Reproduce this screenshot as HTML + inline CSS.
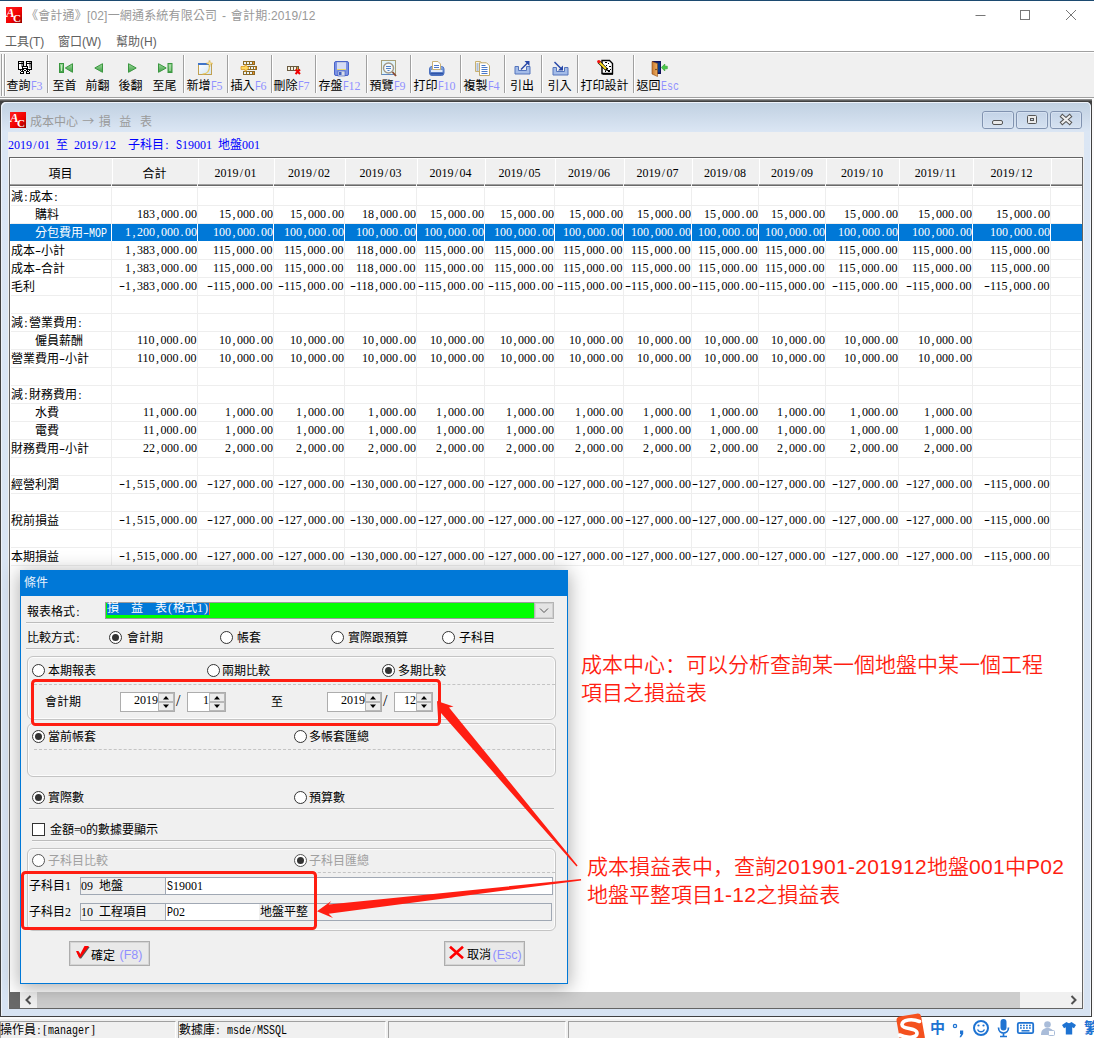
<!DOCTYPE html><html><head><meta charset="utf-8"><title>會計通</title><style>
*{box-sizing:border-box;margin:0;padding:0}
html,body{width:1094px;height:1038px;overflow:hidden;background:#fff}
body{position:relative;font-family:"Liberation Serif","Noto Sans CJK TC",sans-serif;font-size:12px;color:#000}
i{display:inline-block;width:6px;font-style:normal;text-align:center}
.m{transform:scaleX(1.5)}
div{position:absolute;white-space:nowrap}
svg{position:absolute;overflow:visible}
.t{font-size:12px}
.l{display:inline-block;transform:scaleX(.8333);transform-origin:0 50%;font-family:"Liberation Mono",monospace}
.u{font-family:"Liberation Sans","Noto Sans CJK TC",sans-serif;font-size:12px}
.fk{color:#9090ff}
.sep{width:2px;border-left:1px solid #a0a0a0;border-right:1px solid #fff}
.hl{height:2px;border-top:1px solid #bcbcbc;border-bottom:1px solid #f8f8f8}
.r{width:13px;height:13px;border:1px solid #333;border-radius:50%;background:#fff}
.r.on::after{content:"";position:absolute;left:2px;top:2px;width:7px;height:7px;border-radius:50%;background:#333}
.r.dis{border-color:#555}
.gb{border:1px solid #c4c4c4;border-radius:6px;box-shadow:inset 0 0 0 1px #fcfcfc}
.dash{height:0;border-top:1px dashed #c4c4c4}
.spin{border:1px solid #adadad;background:#fff}
.red{font-weight:350;color:#ff1e12;font-family:"Liberation Sans","Noto Sans CJK SC",sans-serif;font-size:21px}
.red b{font-weight:normal;letter-spacing:.3px}
</style></head><body><div style="left:0px;top:0px;width:1094px;height:1px;background:#1c4a70"></div><svg style="left:6px;top:7px" width="16" height="16" viewBox="0 0 16 16"><defs><linearGradient id="g6" x1="0" y1="0" x2="1" y2="1"><stop offset="0" stop-color="#ff2020"/><stop offset=".6" stop-color="#f00000"/><stop offset="1" stop-color="#900000"/></linearGradient></defs><rect width="16" height="16" fill="url(#g6)"/><text x="0" y="10" font-family="Liberation Serif,serif" font-style="italic" font-weight="bold" font-size="13" fill="#fff">A</text><text x="7" y="15" font-family="Liberation Serif,serif" font-weight="bold" font-size="11" fill="#fff">C</text></svg><div class="u" style="left:26px;top:8px;height:16px;line-height:16px;color:#999;word-spacing:1.2px;letter-spacing:.18px">《會計通》[02]一網通系統有限公司 - 會計期:2019/12</div><svg style="left:960px;top:1px" width="134" height="29" viewBox="0 0 134 29"><path d="M15.5 14.5h10" stroke="#777" fill="none"/><rect x="60.5" y="9.5" width="9" height="9" stroke="#777" fill="none"/><path d="M106 9l10 10M116 9l-10 10" stroke="#777" fill="none"/></svg><div class="u" style="left:5px;top:34px;height:16px;line-height:16px;color:#606060">工具(T)</div><div class="u" style="left:58px;top:34px;height:16px;line-height:16px;color:#606060">窗口(W)</div><div class="u" style="left:116px;top:34px;height:16px;line-height:16px;color:#606060">幫助(H)</div><div style="left:0px;top:51px;width:1094px;height:47px;background:#f0f0f0;border-top:1px solid #a0a0a0;border-bottom:1px solid #a0a0a0"></div><div style="left:0px;top:52px;width:1094px;height:1px;background:#fff"></div><div style="left:0px;top:98px;width:1094px;height:1px;background:#fff"></div><div class="sep" style="left:1px;top:54px;width:2px;height:42px;"></div><div class="sep" style="left:4px;top:54px;width:2px;height:42px;"></div><div class="sep" style="left:47px;top:55px;width:2px;height:38px;"></div><div class="sep" style="left:183px;top:55px;width:2px;height:38px;"></div><div class="sep" style="left:227px;top:55px;width:2px;height:38px;"></div><div class="sep" style="left:271px;top:55px;width:2px;height:38px;"></div><div class="sep" style="left:315px;top:55px;width:2px;height:38px;"></div><div class="sep" style="left:366px;top:55px;width:2px;height:38px;"></div><div class="sep" style="left:410px;top:55px;width:2px;height:38px;"></div><div class="sep" style="left:460px;top:55px;width:2px;height:38px;"></div><div class="sep" style="left:504px;top:55px;width:2px;height:38px;"></div><div class="sep" style="left:541px;top:55px;width:2px;height:38px;"></div><div class="sep" style="left:577px;top:55px;width:2px;height:38px;"></div><div class="sep" style="left:633px;top:55px;width:2px;height:38px;"></div><div class="t" style="left:6.5px;top:79px;height:15px;line-height:15px;">查詢<span class="fk"><span class="l" style="margin-right:-1.2px">F</span>3</span></div><div class="t" style="left:52.5px;top:79px;height:15px;line-height:15px;">至首</div><div class="t" style="left:85.5px;top:79px;height:15px;line-height:15px;">前翻</div><div class="t" style="left:118.5px;top:79px;height:15px;line-height:15px;">後翻</div><div class="t" style="left:152.5px;top:79px;height:15px;line-height:15px;">至尾</div><div class="t" style="left:186.5px;top:79px;height:15px;line-height:15px;">新增<span class="fk"><span class="l" style="margin-right:-1.2px">F</span>5</span></div><div class="t" style="left:230.5px;top:79px;height:15px;line-height:15px;">插入<span class="fk"><span class="l" style="margin-right:-1.2px">F</span>6</span></div><div class="t" style="left:273.5px;top:79px;height:15px;line-height:15px;">刪除<span class="fk"><span class="l" style="margin-right:-1.2px">F</span>7</span></div><div class="t" style="left:318.5px;top:79px;height:15px;line-height:15px;">存盤<span class="fk"><span class="l" style="margin-right:-1.2px">F</span>12</span></div><div class="t" style="left:369.5px;top:79px;height:15px;line-height:15px;">預覽<span class="fk"><span class="l" style="margin-right:-1.2px">F</span>9</span></div><div class="t" style="left:413.5px;top:79px;height:15px;line-height:15px;">打印<span class="fk"><span class="l" style="margin-right:-1.2px">F</span>10</span></div><div class="t" style="left:463.5px;top:79px;height:15px;line-height:15px;">複製<span class="fk"><span class="l" style="margin-right:-1.2px">F</span>4</span></div><div class="t" style="left:510px;top:79px;height:15px;line-height:15px;">引出</div><div class="t" style="left:547.5px;top:79px;height:15px;line-height:15px;">引入</div><div class="t" style="left:580.5px;top:79px;height:15px;line-height:15px;">打印設計</div><div class="t" style="left:636.5px;top:79px;height:15px;line-height:15px;">返回<span class="fk"><span class="l" style="margin-right:-3.6px">Esc</span></span></div><svg width="0" height="0" style="left:0;top:0"><defs><linearGradient id="gg" x1="0" y1="0" x2="0" y2="1"><stop offset="0" stop-color="#9ad89a"/><stop offset="1" stop-color="#3f9f45"/></linearGradient><linearGradient id="gb" x1="0" y1="0" x2="0" y2="1"><stop offset="0" stop-color="#8fb0e6"/><stop offset="1" stop-color="#3c62b4"/></linearGradient><linearGradient id="gw" x1="0" y1="0" x2="1" y2="1"><stop offset="0" stop-color="#ffffff"/><stop offset="1" stop-color="#cfe4f6"/></linearGradient><linearGradient id="gd" x1="0" y1="0" x2="1" y2="0"><stop offset="0" stop-color="#c87830"/><stop offset="1" stop-color="#f0b060"/></linearGradient></defs></svg><svg style="left:18px;top:61px" width="14" height="13" viewBox="0 0 14 13" ><g shape-rendering="crispEdges"><rect x="0" y="0" width="6" height="1" fill="#000"/><rect x="8" y="0" width="6" height="1" fill="#000"/><rect x="0" y="1" width="1" height="1" fill="#000"/><rect x="1" y="1" width="2" height="1" fill="#fff"/><rect x="3" y="1" width="2" height="1" fill="#909090"/><rect x="5" y="1" width="1" height="1" fill="#000"/><rect x="8" y="1" width="1" height="1" fill="#000"/><rect x="9" y="1" width="2" height="1" fill="#fff"/><rect x="11" y="1" width="2" height="1" fill="#909090"/><rect x="13" y="1" width="1" height="1" fill="#000"/><rect x="0" y="2" width="6" height="1" fill="#000"/><rect x="8" y="2" width="6" height="1" fill="#000"/><rect x="0" y="3" width="1" height="1" fill="#000"/><rect x="1" y="3" width="2" height="1" fill="#fff"/><rect x="3" y="3" width="2" height="1" fill="#909090"/><rect x="5" y="3" width="1" height="1" fill="#000"/><rect x="8" y="3" width="1" height="1" fill="#000"/><rect x="9" y="3" width="2" height="1" fill="#fff"/><rect x="11" y="3" width="2" height="1" fill="#909090"/><rect x="13" y="3" width="1" height="1" fill="#000"/><rect x="0" y="4" width="1" height="1" fill="#000"/><rect x="1" y="4" width="2" height="1" fill="#fff"/><rect x="3" y="4" width="2" height="1" fill="#909090"/><rect x="5" y="4" width="1" height="1" fill="#000"/><rect x="8" y="4" width="1" height="1" fill="#000"/><rect x="9" y="4" width="2" height="1" fill="#fff"/><rect x="11" y="4" width="2" height="1" fill="#909090"/><rect x="13" y="4" width="1" height="1" fill="#000"/><rect x="0" y="5" width="1" height="1" fill="#000"/><rect x="1" y="5" width="2" height="1" fill="#fff"/><rect x="3" y="5" width="1" height="1" fill="#909090"/><rect x="4" y="5" width="6" height="1" fill="#000"/><rect x="10" y="5" width="1" height="1" fill="#fff"/><rect x="11" y="5" width="2" height="1" fill="#909090"/><rect x="13" y="5" width="1" height="1" fill="#000"/><rect x="0" y="6" width="1" height="1" fill="#000"/><rect x="1" y="6" width="3" height="1" fill="#fff"/><rect x="4" y="6" width="1" height="1" fill="#000"/><rect x="5" y="6" width="4" height="1" fill="#fff"/><rect x="9" y="6" width="1" height="1" fill="#000"/><rect x="10" y="6" width="1" height="1" fill="#fff"/><rect x="11" y="6" width="2" height="1" fill="#909090"/><rect x="13" y="6" width="1" height="1" fill="#000"/><rect x="0" y="7" width="1" height="1" fill="#000"/><rect x="1" y="7" width="3" height="1" fill="#fff"/><rect x="4" y="7" width="6" height="1" fill="#000"/><rect x="10" y="7" width="3" height="1" fill="#fff"/><rect x="13" y="7" width="1" height="1" fill="#000"/><rect x="0" y="8" width="6" height="1" fill="#000"/><rect x="6" y="8" width="2" height="1" fill="#fff"/><rect x="8" y="8" width="6" height="1" fill="#000"/><rect x="2" y="9" width="1" height="1" fill="#000"/><rect x="3" y="9" width="1" height="1" fill="#fff"/><rect x="4" y="9" width="1" height="1" fill="#000"/><rect x="5" y="9" width="1" height="1" fill="#fff"/><rect x="6" y="9" width="2" height="1" fill="#000"/><rect x="8" y="9" width="1" height="1" fill="#fff"/><rect x="9" y="9" width="1" height="1" fill="#000"/><rect x="10" y="9" width="1" height="1" fill="#fff"/><rect x="11" y="9" width="1" height="1" fill="#000"/><rect x="3" y="10" width="3" height="1" fill="#000"/><rect x="8" y="10" width="3" height="1" fill="#000"/><rect x="2" y="11" width="1" height="1" fill="#000"/><rect x="3" y="11" width="2" height="1" fill="#fff"/><rect x="5" y="11" width="1" height="1" fill="#000"/><rect x="8" y="11" width="1" height="1" fill="#000"/><rect x="9" y="11" width="2" height="1" fill="#fff"/><rect x="11" y="11" width="1" height="1" fill="#000"/><rect x="2" y="12" width="4" height="1" fill="#000"/><rect x="8" y="12" width="4" height="1" fill="#000"/></g></svg><svg style="left:59px;top:63px" width="15" height="10" viewBox="0 0 15 10" ><rect x=".5" y=".5" width="4" height="9" fill="url(#gg)" stroke="#3a963f"/><rect x="2" y="2" width="1" height="6" fill="#c8ecc0"/><path d="M6.3 5L13.5.7v8.6z" fill="url(#gg)" stroke="#3a963f" stroke-linejoin="round"/></svg><svg style="left:94px;top:63px" width="10" height="10" viewBox="0 0 10 10" ><path d="M.8 5L8.5.7v8.6z" fill="url(#gg)" stroke="#3a963f" stroke-linejoin="round"/></svg><svg style="left:127px;top:63px" width="10" height="10" viewBox="0 0 10 10" ><path d="M9.2 5L1.5.7v8.6z" fill="url(#gg)" stroke="#3a963f" stroke-linejoin="round"/></svg><svg style="left:157px;top:63px" width="16" height="10" viewBox="0 0 16 10" ><path d="M9.2 5L1.5.7v8.6z" fill="url(#gg)" stroke="#3a963f" stroke-linejoin="round"/><rect x="11" y=".5" width="4" height="9" fill="url(#gg)" stroke="#3a963f"/><rect x="12.5" y="2" width="1" height="6" fill="#c8ecc0"/></svg><svg style="left:197px;top:60px" width="17" height="16" viewBox="0 0 17 16" ><rect x="1.5" y="3.5" width="13" height="11" fill="url(#gw)" stroke="#c0a050"/><rect x="1" y="3" width="11" height="2" fill="#3f74c8"/><path d="M12.5 6c0 5-2 8-7 8" stroke="#e8c860" stroke-width="1.2" fill="none"/><path d="M12.5 .5v6M9.5 3.5h6" stroke="#d8a830" stroke-width="1.6"/><path d="M12.5 1.5v4M10.5 3.5h4" stroke="#fff2b0" stroke-width=".7"/></svg><svg style="left:241px;top:61px" width="16" height="14" viewBox="0 0 16 14" ><g shape-rendering="crispEdges"><rect x="2" y="0" width="12" height="4" fill="#8a6a28"/><rect x="4" y="5" width="12" height="4" fill="#8a6a28"/><rect x="2" y="10" width="12" height="4" fill="#8a6a28"/><rect x="3" y="1" width="2" height="2" fill="#e8f4fa"/><rect x="6" y="1" width="2" height="2" fill="#e8f4fa"/><rect x="9" y="1" width="2" height="2" fill="#e8f4fa"/><rect x="7" y="6" width="2" height="2" fill="#e8f4fa"/><rect x="10" y="6" width="2" height="2" fill="#e8f4fa"/><rect x="13" y="6" width="2" height="2" fill="#e8f4fa"/><rect x="3" y="11" width="2" height="2" fill="#e8f4fa"/><rect x="6" y="11" width="2" height="2" fill="#e8f4fa"/><rect x="9" y="11" width="2" height="2" fill="#e8f4fa"/><rect x="12" y="1" width="1" height="2" fill="#f09020"/><rect x="14" y="6" width="1" height="2" fill="#f09020"/><rect x="12" y="11" width="1" height="2" fill="#f09020"/></g><path d="M0 5.5h4V3.5L8 7 4 10.5V8.5H0z" fill="#ffd860" stroke="#d89820" stroke-width=".8"/></svg><svg style="left:287px;top:65px" width="14" height="10" viewBox="0 0 14 10" ><g shape-rendering="crispEdges"><rect x="0" y="1" width="12" height="5" fill="#6a5a40"/><rect x="1" y="2" width="2" height="3" fill="#f4f0e0"/><rect x="4" y="2" width="2" height="3" fill="#f4f0e0"/><rect x="7" y="2" width="2" height="3" fill="#f4f0e0"/><rect x="10" y="2" width="1" height="3" fill="#e09030"/></g><path d="M8.5 4.5l4.5 4.5M13 4.5L8.5 9" stroke="#f00000" stroke-width="2"/></svg><svg style="left:334px;top:61px" width="15" height="15" viewBox="0 0 15 15" ><rect x=".5" y=".5" width="14" height="14" rx="1.5" fill="#7b92e3" stroke="#4a63c9"/><rect x="3" y="1" width="9" height="7" fill="#d6dcf5"/><rect x="3" y="1" width="9" height="1" fill="#c0c8e0"/><rect x="4" y="10" width="7" height="5" fill="#d8dce8" stroke="#3c58c0" stroke-width=".6"/><rect x="5" y="11" width="2.5" height="3" fill="#4060c0"/><rect x="3" y="8" width="9" height="1" fill="#e8d870"/></svg><svg style="left:381px;top:60px" width="16" height="17" viewBox="0 0 16 17" ><rect x=".5" y=".5" width="14" height="14" fill="#e0f4fa" stroke="#a8a078"/><path d="M.5 14.5h14" stroke="#6088c0"/><circle cx="7.5" cy="8" r="5" fill="#f4fafc" stroke="#a09888" stroke-width="1.4"/><path d="M5 6.5h5M5 8.5h5" stroke="#5080c8" stroke-width="1.2"/><path d="M6.5 10.5h2" stroke="#5080c8"/><path d="M11.5 12l3.5 4" stroke="#8a4a30" stroke-width="1.8"/></svg><svg style="left:429px;top:61px" width="16" height="15" viewBox="0 0 16 15" ><rect x=".5" y="5.5" width="14.5" height="9" rx="2.5" fill="url(#gb)" stroke="#4a70c0"/><path d="M3.5 8.5V.5h5.5l2.500 2.500v5.500z" fill="#fff" stroke="#c8b078"/><path d="M5 4.500h5M5 6.500h5" stroke="#5078c8"/><rect x="2" y="9" width="11.500" height="2" fill="#dfe9fa"/><path d="M1.500 12.500h12.500" stroke="#2f54a8"/></svg><svg style="left:475px;top:61px" width="15" height="15" viewBox="0 0 15 15" ><path d="M.5 .5h5l2 2v8h-7z" fill="#fbf6e8" stroke="#c8b070"/><path d="M4.500 1.800h7l3 3v9.700h-10z" fill="#fff" stroke="#c0a868"/><path d="M6.500 4.500h4M6.500 6.500h6M6.500 8.500h6M6.500 10.500h6M6.500 12.500h6" stroke="#4878c8" stroke-width="1.100"/><path d="M1.500 3h2M1.500 5h2M1.500 7h2M1.500 9h2" stroke="#4878c8" stroke-width=".9"/></svg><svg style="left:514px;top:60px" width="17" height="15" viewBox="0 0 17 15" ><path d="M1 6.500h3.500v4h8v-4H16v7.500H1z" fill="#a4bce8" stroke="#5474bc"/><path d="M7 9.500L14 2.500" stroke="#2848a8" stroke-width="1.500"/><path d="M10.500 1h5v5z" fill="#2848a8"/></svg><svg style="left:552px;top:60px" width="17" height="16" viewBox="0 0 17 16" ><path d="M1 7.500h3.500v4h8v-4H16v7.500H1z" fill="#a4bce8" stroke="#5474bc"/><path d="M2.500 2L9 8.500" stroke="#2848a8" stroke-width="1.500"/><path d="M11 5.500v5h-5z" fill="#2848a8"/></svg><svg style="left:597px;top:59px" width="17" height="16" viewBox="0 0 17 16" ><path d="M5 1.500h7.500l3 3v10H5z" fill="#fff" stroke="#000" stroke-width="1.400"/><path d="M5.500 15.300h10.500" stroke="#000" stroke-width="1"/><g fill="#000" shape-rendering="crispEdges"><rect x="8" y="3" width="2" height="1"/><rect x="11" y="4" width="1" height="1"/><rect x="9" y="6" width="1" height="1"/><rect x="12" y="7" width="2" height="1"/><rect x="10" y="9" width="1" height="1"/><rect x="13" y="10" width="1" height="1"/><rect x="11" y="11" width="2" height="2"/><rect x="8" y="12" width="1" height="1"/></g><path d="M1.800 2.800l8 8" stroke="#000" stroke-width="3.200"/><path d="M2.500 3.500l6.500 6.500" stroke="#ffe020" stroke-width="1.800"/><circle cx="1.800" cy="2.600" r="1.700" fill="#f01010"/><path d="M9 10l1.800 1.800" stroke="#000" stroke-width="1.400"/></svg><svg style="left:651px;top:60px" width="17" height="17" viewBox="0 0 17 17" ><rect x="1" y="1" width="9" height="13" fill="#101058"/><rect x="3" y="2.500" width="6" height="10" fill="#0a3a8a"/><path d="M1 1.500l5.500 2v13L1 14z" fill="url(#gd)" stroke="#8a4810" stroke-width=".6"/><circle cx="5" cy="9.500" r=".7" fill="#402000"/><path d="M10.300 7.500l3.500-3.500v2.200h2.500v2.600h-2.500V11z" fill="#48c848" stroke="#2a9a2a" stroke-width=".6"/></svg><div style="left:0px;top:99px;width:1092px;height:918px;background:linear-gradient(#909090 0,#909090 1px,#606060 1px,#606060 2px,#404040 2px)"></div><div style="left:1092px;top:98px;width:2px;height:919px;background:#fafafa"></div><div style="left:1px;top:102px;width:1090px;height:914px;background:linear-gradient(#c0d0e1 0,#dbe6f4 30px,#d7e3f2 100%);border-radius:5px 5px 0 0;box-shadow:inset 1px 1px 0 #eef3fa,inset -1px 0 0 #eef3fa"></div><svg style="left:10px;top:112px" width="16" height="16" viewBox="0 0 16 16"><defs><linearGradient id="g10" x1="0" y1="0" x2="1" y2="1"><stop offset="0" stop-color="#ff2020"/><stop offset=".6" stop-color="#f00000"/><stop offset="1" stop-color="#900000"/></linearGradient></defs><rect width="16" height="16" fill="url(#g10)"/><text x="0" y="10" font-family="Liberation Serif,serif" font-style="italic" font-weight="bold" font-size="13" fill="#fff">A</text><text x="7" y="15" font-family="Liberation Serif,serif" font-weight="bold" font-size="11" fill="#fff">C</text></svg><div class="u" style="left:30px;top:113px;height:16px;line-height:16px;color:#9a9a9a;white-space:pre;word-spacing:1px">成本中心 <span style="font-family:Noto Sans CJK TC,sans-serif">→</span> 損  益  表</div><svg width="0" height="0" style="left:0;top:0"><defs><linearGradient id="cb" x1="0" y1="0" x2="0" y2="1"><stop offset="0" stop-color="#c3d3e7"/><stop offset="1" stop-color="#d6e2f1"/></linearGradient></defs></svg><svg style="left:982px;top:111px" width="32" height="18" viewBox="0 0 32 18"><rect x=".5" y=".5" width="31" height="17" rx="2.500" fill="url(#cb)" stroke="#8193b0"/><rect x="1.500" y="1.500" width="29" height="15" rx="1.500" fill="none" stroke="#dbe6f3" stroke-opacity=".7"/><rect x="10.500" y="9.500" width="10" height="4" rx="1.500" fill="#eaeaea" stroke="#555"/></svg><svg style="left:1016px;top:111px" width="32" height="18" viewBox="0 0 32 18"><rect x=".5" y=".5" width="31" height="17" rx="2.500" fill="url(#cb)" stroke="#8193b0"/><rect x="1.500" y="1.500" width="29" height="15" rx="1.500" fill="none" stroke="#dbe6f3" stroke-opacity=".7"/><rect x="11.500" y="4.500" width="9" height="8" rx="1" fill="#eaeaea" stroke="#555"/><rect x="14.500" y="7.500" width="3" height="2" fill="#c6d6ea" stroke="#555"/></svg><svg style="left:1050px;top:111px" width="32" height="18" viewBox="0 0 32 18"><rect x=".5" y=".5" width="31" height="17" rx="2.500" fill="url(#cb)" stroke="#8193b0"/><rect x="1.500" y="1.500" width="29" height="15" rx="1.500" fill="none" stroke="#dbe6f3" stroke-opacity=".7"/><path d="M12.500 5.500l7 6M19.500 5.500l-7 6" stroke="#555" stroke-width="4.200" stroke-linecap="square"/><path d="M12.500 5.500l7 6M19.500 5.500l-7 6" stroke="#f0f0f0" stroke-width="2.200" stroke-linecap="square"/></svg><div style="left:8px;top:132px;width:1076px;height:877px;background:#f0f0f0"></div><div class="t" style="left:8px;top:138px;height:15px;line-height:15px;color:#0000ff">2019<i>/</i>01<i>&nbsp;</i>至<i>&nbsp;</i>2019<i>/</i>12<i>&nbsp;</i><i>&nbsp;</i>子科目<i>:</i><i>&nbsp;</i><span class="l" style="margin-right:-1.2px">S</span>19001<i>&nbsp;</i>地盤001</div><div style="left:9px;top:157px;width:1074px;height:852px;background:#fff;border:1px solid #646464"></div><div style="left:10px;top:158px;width:1072px;height:28px;background:#f0f0f0"></div><div style="left:10px;top:158px;width:1072px;height:1px;background:#fff"></div><div style="left:10px;top:184px;width:1072px;height:2px;background:#696969;border-top:1px solid #a0a0a0"></div><div style="left:10px;top:187px;width:1072px;height:1px;background:#eee"></div><div style="left:10px;top:159px;width:1px;height:25px;background:#fff"></div><div style="left:112px;top:159px;width:1px;height:25px;background:#fff"></div><div style="left:111px;top:159px;width:1px;height:27px;background:#f0f0f0"></div><div style="left:198px;top:159px;width:1px;height:25px;background:#fff"></div><div style="left:197px;top:159px;width:1px;height:27px;background:#f0f0f0"></div><div style="left:274px;top:159px;width:1px;height:25px;background:#fff"></div><div style="left:273px;top:159px;width:1px;height:27px;background:#f0f0f0"></div><div style="left:345px;top:159px;width:1px;height:25px;background:#fff"></div><div style="left:344px;top:159px;width:1px;height:27px;background:#f0f0f0"></div><div style="left:417px;top:159px;width:1px;height:25px;background:#fff"></div><div style="left:416px;top:159px;width:1px;height:27px;background:#f0f0f0"></div><div style="left:485px;top:159px;width:1px;height:25px;background:#fff"></div><div style="left:484px;top:159px;width:1px;height:27px;background:#f0f0f0"></div><div style="left:555px;top:159px;width:1px;height:25px;background:#fff"></div><div style="left:554px;top:159px;width:1px;height:27px;background:#f0f0f0"></div><div style="left:624px;top:159px;width:1px;height:25px;background:#fff"></div><div style="left:623px;top:159px;width:1px;height:27px;background:#f0f0f0"></div><div style="left:692px;top:159px;width:1px;height:25px;background:#fff"></div><div style="left:691px;top:159px;width:1px;height:27px;background:#f0f0f0"></div><div style="left:759px;top:159px;width:1px;height:25px;background:#fff"></div><div style="left:758px;top:159px;width:1px;height:27px;background:#f0f0f0"></div><div style="left:826px;top:159px;width:1px;height:25px;background:#fff"></div><div style="left:825px;top:159px;width:1px;height:27px;background:#f0f0f0"></div><div style="left:899px;top:159px;width:1px;height:25px;background:#fff"></div><div style="left:898px;top:159px;width:1px;height:27px;background:#f0f0f0"></div><div style="left:973px;top:159px;width:1px;height:25px;background:#fff"></div><div style="left:972px;top:159px;width:1px;height:27px;background:#f0f0f0"></div><div style="left:1051px;top:159px;width:1px;height:25px;background:#fff"></div><div style="left:1050px;top:159px;width:1px;height:27px;background:#f0f0f0"></div><div class="t" style="left:10px;top:167px;height:15px;line-height:15px;width:101px;text-align:center">項目</div><div class="t" style="left:112px;top:167px;height:15px;line-height:15px;width:85px;text-align:center">合計</div><div class="t" style="left:198px;top:166px;height:15px;line-height:15px;width:75px;text-align:center">2019<i>/</i>01</div><div class="t" style="left:274px;top:166px;height:15px;line-height:15px;width:70px;text-align:center">2019<i>/</i>02</div><div class="t" style="left:345px;top:166px;height:15px;line-height:15px;width:71px;text-align:center">2019<i>/</i>03</div><div class="t" style="left:417px;top:166px;height:15px;line-height:15px;width:67px;text-align:center">2019<i>/</i>04</div><div class="t" style="left:485px;top:166px;height:15px;line-height:15px;width:69px;text-align:center">2019<i>/</i>05</div><div class="t" style="left:555px;top:166px;height:15px;line-height:15px;width:68px;text-align:center">2019<i>/</i>06</div><div class="t" style="left:624px;top:166px;height:15px;line-height:15px;width:67px;text-align:center">2019<i>/</i>07</div><div class="t" style="left:692px;top:166px;height:15px;line-height:15px;width:66px;text-align:center">2019<i>/</i>08</div><div class="t" style="left:759px;top:166px;height:15px;line-height:15px;width:66px;text-align:center">2019<i>/</i>09</div><div class="t" style="left:826px;top:166px;height:15px;line-height:15px;width:72px;text-align:center">2019<i>/</i>10</div><div class="t" style="left:899px;top:166px;height:15px;line-height:15px;width:73px;text-align:center">2019<i>/</i>11</div><div class="t" style="left:973px;top:166px;height:15px;line-height:15px;width:77px;text-align:center">2019<i>/</i>12</div><div style="left:11px;top:205px;width:1070px;height:1px;background:#eee"></div><div class="t" style="left:11px;top:189px;height:16px;line-height:16px;">減<i>:</i>成本<i>:</i></div><div style="left:11px;top:223px;width:1070px;height:1px;background:#eee"></div><div class="t" style="left:35px;top:207px;height:16px;line-height:16px;">購料</div><div class="t" style="left:137px;top:206px;height:16px;line-height:16px;">183<i>,</i>000<i>.</i>00</div><div class="t" style="left:219px;top:206px;height:16px;line-height:16px;">15<i>,</i>000<i>.</i>00</div><div class="t" style="left:290px;top:206px;height:16px;line-height:16px;">15<i>,</i>000<i>.</i>00</div><div class="t" style="left:362px;top:206px;height:16px;line-height:16px;">18<i>,</i>000<i>.</i>00</div><div class="t" style="left:430px;top:206px;height:16px;line-height:16px;">15<i>,</i>000<i>.</i>00</div><div class="t" style="left:500px;top:206px;height:16px;line-height:16px;">15<i>,</i>000<i>.</i>00</div><div class="t" style="left:569px;top:206px;height:16px;line-height:16px;">15<i>,</i>000<i>.</i>00</div><div class="t" style="left:637px;top:206px;height:16px;line-height:16px;">15<i>,</i>000<i>.</i>00</div><div class="t" style="left:704px;top:206px;height:16px;line-height:16px;">15<i>,</i>000<i>.</i>00</div><div class="t" style="left:771px;top:206px;height:16px;line-height:16px;">15<i>,</i>000<i>.</i>00</div><div class="t" style="left:844px;top:206px;height:16px;line-height:16px;">15<i>,</i>000<i>.</i>00</div><div class="t" style="left:918px;top:206px;height:16px;line-height:16px;">15<i>,</i>000<i>.</i>00</div><div class="t" style="left:996px;top:206px;height:16px;line-height:16px;">15<i>,</i>000<i>.</i>00</div><div style="left:10px;top:224px;width:1072px;height:17px;background:#0078d7"></div><div class="t" style="left:35px;top:225px;height:16px;line-height:16px;color:#fff;">分包費用<i class="m">-</i><span class="l" style="margin-right:-3.6px">MOP</span></div><div class="t" style="left:125px;top:224px;height:16px;line-height:16px;color:#fff;">1<i>,</i>200<i>,</i>000<i>.</i>00</div><div class="t" style="left:213px;top:224px;height:16px;line-height:16px;color:#fff;">100<i>,</i>000<i>.</i>00</div><div class="t" style="left:284px;top:224px;height:16px;line-height:16px;color:#fff;">100<i>,</i>000<i>.</i>00</div><div class="t" style="left:356px;top:224px;height:16px;line-height:16px;color:#fff;">100<i>,</i>000<i>.</i>00</div><div class="t" style="left:424px;top:224px;height:16px;line-height:16px;color:#fff;">100<i>,</i>000<i>.</i>00</div><div class="t" style="left:494px;top:224px;height:16px;line-height:16px;color:#fff;">100<i>,</i>000<i>.</i>00</div><div class="t" style="left:563px;top:224px;height:16px;line-height:16px;color:#fff;">100<i>,</i>000<i>.</i>00</div><div class="t" style="left:631px;top:224px;height:16px;line-height:16px;color:#fff;">100<i>,</i>000<i>.</i>00</div><div class="t" style="left:698px;top:224px;height:16px;line-height:16px;color:#fff;">100<i>,</i>000<i>.</i>00</div><div class="t" style="left:765px;top:224px;height:16px;line-height:16px;color:#fff;">100<i>,</i>000<i>.</i>00</div><div class="t" style="left:838px;top:224px;height:16px;line-height:16px;color:#fff;">100<i>,</i>000<i>.</i>00</div><div class="t" style="left:912px;top:224px;height:16px;line-height:16px;color:#fff;">100<i>,</i>000<i>.</i>00</div><div class="t" style="left:990px;top:224px;height:16px;line-height:16px;color:#fff;">100<i>,</i>000<i>.</i>00</div><div style="left:11px;top:259px;width:1070px;height:1px;background:#eee"></div><div class="t" style="left:11px;top:243px;height:16px;line-height:16px;">成本<i class="m">-</i>小計</div><div class="t" style="left:125px;top:242px;height:16px;line-height:16px;">1<i>,</i>383<i>,</i>000<i>.</i>00</div><div class="t" style="left:213px;top:242px;height:16px;line-height:16px;">115<i>,</i>000<i>.</i>00</div><div class="t" style="left:284px;top:242px;height:16px;line-height:16px;">115<i>,</i>000<i>.</i>00</div><div class="t" style="left:356px;top:242px;height:16px;line-height:16px;">118<i>,</i>000<i>.</i>00</div><div class="t" style="left:424px;top:242px;height:16px;line-height:16px;">115<i>,</i>000<i>.</i>00</div><div class="t" style="left:494px;top:242px;height:16px;line-height:16px;">115<i>,</i>000<i>.</i>00</div><div class="t" style="left:563px;top:242px;height:16px;line-height:16px;">115<i>,</i>000<i>.</i>00</div><div class="t" style="left:631px;top:242px;height:16px;line-height:16px;">115<i>,</i>000<i>.</i>00</div><div class="t" style="left:698px;top:242px;height:16px;line-height:16px;">115<i>,</i>000<i>.</i>00</div><div class="t" style="left:765px;top:242px;height:16px;line-height:16px;">115<i>,</i>000<i>.</i>00</div><div class="t" style="left:838px;top:242px;height:16px;line-height:16px;">115<i>,</i>000<i>.</i>00</div><div class="t" style="left:912px;top:242px;height:16px;line-height:16px;">115<i>,</i>000<i>.</i>00</div><div class="t" style="left:990px;top:242px;height:16px;line-height:16px;">115<i>,</i>000<i>.</i>00</div><div style="left:11px;top:277px;width:1070px;height:1px;background:#eee"></div><div class="t" style="left:11px;top:261px;height:16px;line-height:16px;">成本<i class="m">-</i>合計</div><div class="t" style="left:125px;top:260px;height:16px;line-height:16px;">1<i>,</i>383<i>,</i>000<i>.</i>00</div><div class="t" style="left:213px;top:260px;height:16px;line-height:16px;">115<i>,</i>000<i>.</i>00</div><div class="t" style="left:284px;top:260px;height:16px;line-height:16px;">115<i>,</i>000<i>.</i>00</div><div class="t" style="left:356px;top:260px;height:16px;line-height:16px;">118<i>,</i>000<i>.</i>00</div><div class="t" style="left:424px;top:260px;height:16px;line-height:16px;">115<i>,</i>000<i>.</i>00</div><div class="t" style="left:494px;top:260px;height:16px;line-height:16px;">115<i>,</i>000<i>.</i>00</div><div class="t" style="left:563px;top:260px;height:16px;line-height:16px;">115<i>,</i>000<i>.</i>00</div><div class="t" style="left:631px;top:260px;height:16px;line-height:16px;">115<i>,</i>000<i>.</i>00</div><div class="t" style="left:698px;top:260px;height:16px;line-height:16px;">115<i>,</i>000<i>.</i>00</div><div class="t" style="left:765px;top:260px;height:16px;line-height:16px;">115<i>,</i>000<i>.</i>00</div><div class="t" style="left:838px;top:260px;height:16px;line-height:16px;">115<i>,</i>000<i>.</i>00</div><div class="t" style="left:912px;top:260px;height:16px;line-height:16px;">115<i>,</i>000<i>.</i>00</div><div class="t" style="left:990px;top:260px;height:16px;line-height:16px;">115<i>,</i>000<i>.</i>00</div><div style="left:11px;top:295px;width:1070px;height:1px;background:#eee"></div><div class="t" style="left:11px;top:279px;height:16px;line-height:16px;">毛利</div><div class="t" style="left:119px;top:278px;height:16px;line-height:16px;"><i class="m">-</i>1<i>,</i>383<i>,</i>000<i>.</i>00</div><div class="t" style="left:207px;top:278px;height:16px;line-height:16px;"><i class="m">-</i>115<i>,</i>000<i>.</i>00</div><div class="t" style="left:278px;top:278px;height:16px;line-height:16px;"><i class="m">-</i>115<i>,</i>000<i>.</i>00</div><div class="t" style="left:350px;top:278px;height:16px;line-height:16px;"><i class="m">-</i>118<i>,</i>000<i>.</i>00</div><div class="t" style="left:418px;top:278px;height:16px;line-height:16px;"><i class="m">-</i>115<i>,</i>000<i>.</i>00</div><div class="t" style="left:488px;top:278px;height:16px;line-height:16px;"><i class="m">-</i>115<i>,</i>000<i>.</i>00</div><div class="t" style="left:557px;top:278px;height:16px;line-height:16px;"><i class="m">-</i>115<i>,</i>000<i>.</i>00</div><div class="t" style="left:625px;top:278px;height:16px;line-height:16px;"><i class="m">-</i>115<i>,</i>000<i>.</i>00</div><div class="t" style="left:692px;top:278px;height:16px;line-height:16px;"><i class="m">-</i>115<i>,</i>000<i>.</i>00</div><div class="t" style="left:759px;top:278px;height:16px;line-height:16px;"><i class="m">-</i>115<i>,</i>000<i>.</i>00</div><div class="t" style="left:832px;top:278px;height:16px;line-height:16px;"><i class="m">-</i>115<i>,</i>000<i>.</i>00</div><div class="t" style="left:906px;top:278px;height:16px;line-height:16px;"><i class="m">-</i>115<i>,</i>000<i>.</i>00</div><div class="t" style="left:984px;top:278px;height:16px;line-height:16px;"><i class="m">-</i>115<i>,</i>000<i>.</i>00</div><div style="left:11px;top:313px;width:1070px;height:1px;background:#eee"></div><div style="left:11px;top:331px;width:1070px;height:1px;background:#eee"></div><div class="t" style="left:11px;top:315px;height:16px;line-height:16px;">減<i>:</i>營業費用<i>:</i></div><div style="left:11px;top:349px;width:1070px;height:1px;background:#eee"></div><div class="t" style="left:35px;top:333px;height:16px;line-height:16px;">僱員薪酬</div><div class="t" style="left:137px;top:332px;height:16px;line-height:16px;">110<i>,</i>000<i>.</i>00</div><div class="t" style="left:219px;top:332px;height:16px;line-height:16px;">10<i>,</i>000<i>.</i>00</div><div class="t" style="left:290px;top:332px;height:16px;line-height:16px;">10<i>,</i>000<i>.</i>00</div><div class="t" style="left:362px;top:332px;height:16px;line-height:16px;">10<i>,</i>000<i>.</i>00</div><div class="t" style="left:430px;top:332px;height:16px;line-height:16px;">10<i>,</i>000<i>.</i>00</div><div class="t" style="left:500px;top:332px;height:16px;line-height:16px;">10<i>,</i>000<i>.</i>00</div><div class="t" style="left:569px;top:332px;height:16px;line-height:16px;">10<i>,</i>000<i>.</i>00</div><div class="t" style="left:637px;top:332px;height:16px;line-height:16px;">10<i>,</i>000<i>.</i>00</div><div class="t" style="left:704px;top:332px;height:16px;line-height:16px;">10<i>,</i>000<i>.</i>00</div><div class="t" style="left:771px;top:332px;height:16px;line-height:16px;">10<i>,</i>000<i>.</i>00</div><div class="t" style="left:844px;top:332px;height:16px;line-height:16px;">10<i>,</i>000<i>.</i>00</div><div class="t" style="left:918px;top:332px;height:16px;line-height:16px;">10<i>,</i>000<i>.</i>00</div><div style="left:11px;top:367px;width:1070px;height:1px;background:#eee"></div><div class="t" style="left:11px;top:351px;height:16px;line-height:16px;">營業費用<i class="m">-</i>小計</div><div class="t" style="left:137px;top:350px;height:16px;line-height:16px;">110<i>,</i>000<i>.</i>00</div><div class="t" style="left:219px;top:350px;height:16px;line-height:16px;">10<i>,</i>000<i>.</i>00</div><div class="t" style="left:290px;top:350px;height:16px;line-height:16px;">10<i>,</i>000<i>.</i>00</div><div class="t" style="left:362px;top:350px;height:16px;line-height:16px;">10<i>,</i>000<i>.</i>00</div><div class="t" style="left:430px;top:350px;height:16px;line-height:16px;">10<i>,</i>000<i>.</i>00</div><div class="t" style="left:500px;top:350px;height:16px;line-height:16px;">10<i>,</i>000<i>.</i>00</div><div class="t" style="left:569px;top:350px;height:16px;line-height:16px;">10<i>,</i>000<i>.</i>00</div><div class="t" style="left:637px;top:350px;height:16px;line-height:16px;">10<i>,</i>000<i>.</i>00</div><div class="t" style="left:704px;top:350px;height:16px;line-height:16px;">10<i>,</i>000<i>.</i>00</div><div class="t" style="left:771px;top:350px;height:16px;line-height:16px;">10<i>,</i>000<i>.</i>00</div><div class="t" style="left:844px;top:350px;height:16px;line-height:16px;">10<i>,</i>000<i>.</i>00</div><div class="t" style="left:918px;top:350px;height:16px;line-height:16px;">10<i>,</i>000<i>.</i>00</div><div style="left:11px;top:385px;width:1070px;height:1px;background:#eee"></div><div style="left:11px;top:403px;width:1070px;height:1px;background:#eee"></div><div class="t" style="left:11px;top:387px;height:16px;line-height:16px;">減<i>:</i>財務費用<i>:</i></div><div style="left:11px;top:421px;width:1070px;height:1px;background:#eee"></div><div class="t" style="left:35px;top:405px;height:16px;line-height:16px;">水費</div><div class="t" style="left:143px;top:404px;height:16px;line-height:16px;">11<i>,</i>000<i>.</i>00</div><div class="t" style="left:225px;top:404px;height:16px;line-height:16px;">1<i>,</i>000<i>.</i>00</div><div class="t" style="left:296px;top:404px;height:16px;line-height:16px;">1<i>,</i>000<i>.</i>00</div><div class="t" style="left:368px;top:404px;height:16px;line-height:16px;">1<i>,</i>000<i>.</i>00</div><div class="t" style="left:436px;top:404px;height:16px;line-height:16px;">1<i>,</i>000<i>.</i>00</div><div class="t" style="left:506px;top:404px;height:16px;line-height:16px;">1<i>,</i>000<i>.</i>00</div><div class="t" style="left:575px;top:404px;height:16px;line-height:16px;">1<i>,</i>000<i>.</i>00</div><div class="t" style="left:643px;top:404px;height:16px;line-height:16px;">1<i>,</i>000<i>.</i>00</div><div class="t" style="left:710px;top:404px;height:16px;line-height:16px;">1<i>,</i>000<i>.</i>00</div><div class="t" style="left:777px;top:404px;height:16px;line-height:16px;">1<i>,</i>000<i>.</i>00</div><div class="t" style="left:850px;top:404px;height:16px;line-height:16px;">1<i>,</i>000<i>.</i>00</div><div class="t" style="left:924px;top:404px;height:16px;line-height:16px;">1<i>,</i>000<i>.</i>00</div><div style="left:11px;top:439px;width:1070px;height:1px;background:#eee"></div><div class="t" style="left:35px;top:423px;height:16px;line-height:16px;">電費</div><div class="t" style="left:143px;top:422px;height:16px;line-height:16px;">11<i>,</i>000<i>.</i>00</div><div class="t" style="left:225px;top:422px;height:16px;line-height:16px;">1<i>,</i>000<i>.</i>00</div><div class="t" style="left:296px;top:422px;height:16px;line-height:16px;">1<i>,</i>000<i>.</i>00</div><div class="t" style="left:368px;top:422px;height:16px;line-height:16px;">1<i>,</i>000<i>.</i>00</div><div class="t" style="left:436px;top:422px;height:16px;line-height:16px;">1<i>,</i>000<i>.</i>00</div><div class="t" style="left:506px;top:422px;height:16px;line-height:16px;">1<i>,</i>000<i>.</i>00</div><div class="t" style="left:575px;top:422px;height:16px;line-height:16px;">1<i>,</i>000<i>.</i>00</div><div class="t" style="left:643px;top:422px;height:16px;line-height:16px;">1<i>,</i>000<i>.</i>00</div><div class="t" style="left:710px;top:422px;height:16px;line-height:16px;">1<i>,</i>000<i>.</i>00</div><div class="t" style="left:777px;top:422px;height:16px;line-height:16px;">1<i>,</i>000<i>.</i>00</div><div class="t" style="left:850px;top:422px;height:16px;line-height:16px;">1<i>,</i>000<i>.</i>00</div><div class="t" style="left:924px;top:422px;height:16px;line-height:16px;">1<i>,</i>000<i>.</i>00</div><div style="left:11px;top:457px;width:1070px;height:1px;background:#eee"></div><div class="t" style="left:11px;top:441px;height:16px;line-height:16px;">財務費用<i class="m">-</i>小計</div><div class="t" style="left:143px;top:440px;height:16px;line-height:16px;">22<i>,</i>000<i>.</i>00</div><div class="t" style="left:225px;top:440px;height:16px;line-height:16px;">2<i>,</i>000<i>.</i>00</div><div class="t" style="left:296px;top:440px;height:16px;line-height:16px;">2<i>,</i>000<i>.</i>00</div><div class="t" style="left:368px;top:440px;height:16px;line-height:16px;">2<i>,</i>000<i>.</i>00</div><div class="t" style="left:436px;top:440px;height:16px;line-height:16px;">2<i>,</i>000<i>.</i>00</div><div class="t" style="left:506px;top:440px;height:16px;line-height:16px;">2<i>,</i>000<i>.</i>00</div><div class="t" style="left:575px;top:440px;height:16px;line-height:16px;">2<i>,</i>000<i>.</i>00</div><div class="t" style="left:643px;top:440px;height:16px;line-height:16px;">2<i>,</i>000<i>.</i>00</div><div class="t" style="left:710px;top:440px;height:16px;line-height:16px;">2<i>,</i>000<i>.</i>00</div><div class="t" style="left:777px;top:440px;height:16px;line-height:16px;">2<i>,</i>000<i>.</i>00</div><div class="t" style="left:850px;top:440px;height:16px;line-height:16px;">2<i>,</i>000<i>.</i>00</div><div class="t" style="left:924px;top:440px;height:16px;line-height:16px;">2<i>,</i>000<i>.</i>00</div><div style="left:11px;top:475px;width:1070px;height:1px;background:#eee"></div><div style="left:11px;top:493px;width:1070px;height:1px;background:#eee"></div><div class="t" style="left:11px;top:477px;height:16px;line-height:16px;">經營利潤</div><div class="t" style="left:119px;top:476px;height:16px;line-height:16px;"><i class="m">-</i>1<i>,</i>515<i>,</i>000<i>.</i>00</div><div class="t" style="left:207px;top:476px;height:16px;line-height:16px;"><i class="m">-</i>127<i>,</i>000<i>.</i>00</div><div class="t" style="left:278px;top:476px;height:16px;line-height:16px;"><i class="m">-</i>127<i>,</i>000<i>.</i>00</div><div class="t" style="left:350px;top:476px;height:16px;line-height:16px;"><i class="m">-</i>130<i>,</i>000<i>.</i>00</div><div class="t" style="left:418px;top:476px;height:16px;line-height:16px;"><i class="m">-</i>127<i>,</i>000<i>.</i>00</div><div class="t" style="left:488px;top:476px;height:16px;line-height:16px;"><i class="m">-</i>127<i>,</i>000<i>.</i>00</div><div class="t" style="left:557px;top:476px;height:16px;line-height:16px;"><i class="m">-</i>127<i>,</i>000<i>.</i>00</div><div class="t" style="left:625px;top:476px;height:16px;line-height:16px;"><i class="m">-</i>127<i>,</i>000<i>.</i>00</div><div class="t" style="left:692px;top:476px;height:16px;line-height:16px;"><i class="m">-</i>127<i>,</i>000<i>.</i>00</div><div class="t" style="left:759px;top:476px;height:16px;line-height:16px;"><i class="m">-</i>127<i>,</i>000<i>.</i>00</div><div class="t" style="left:832px;top:476px;height:16px;line-height:16px;"><i class="m">-</i>127<i>,</i>000<i>.</i>00</div><div class="t" style="left:906px;top:476px;height:16px;line-height:16px;"><i class="m">-</i>127<i>,</i>000<i>.</i>00</div><div class="t" style="left:984px;top:476px;height:16px;line-height:16px;"><i class="m">-</i>115<i>,</i>000<i>.</i>00</div><div style="left:11px;top:511px;width:1070px;height:1px;background:#eee"></div><div style="left:11px;top:529px;width:1070px;height:1px;background:#eee"></div><div class="t" style="left:11px;top:513px;height:16px;line-height:16px;">稅前損益</div><div class="t" style="left:119px;top:512px;height:16px;line-height:16px;"><i class="m">-</i>1<i>,</i>515<i>,</i>000<i>.</i>00</div><div class="t" style="left:207px;top:512px;height:16px;line-height:16px;"><i class="m">-</i>127<i>,</i>000<i>.</i>00</div><div class="t" style="left:278px;top:512px;height:16px;line-height:16px;"><i class="m">-</i>127<i>,</i>000<i>.</i>00</div><div class="t" style="left:350px;top:512px;height:16px;line-height:16px;"><i class="m">-</i>130<i>,</i>000<i>.</i>00</div><div class="t" style="left:418px;top:512px;height:16px;line-height:16px;"><i class="m">-</i>127<i>,</i>000<i>.</i>00</div><div class="t" style="left:488px;top:512px;height:16px;line-height:16px;"><i class="m">-</i>127<i>,</i>000<i>.</i>00</div><div class="t" style="left:557px;top:512px;height:16px;line-height:16px;"><i class="m">-</i>127<i>,</i>000<i>.</i>00</div><div class="t" style="left:625px;top:512px;height:16px;line-height:16px;"><i class="m">-</i>127<i>,</i>000<i>.</i>00</div><div class="t" style="left:692px;top:512px;height:16px;line-height:16px;"><i class="m">-</i>127<i>,</i>000<i>.</i>00</div><div class="t" style="left:759px;top:512px;height:16px;line-height:16px;"><i class="m">-</i>127<i>,</i>000<i>.</i>00</div><div class="t" style="left:832px;top:512px;height:16px;line-height:16px;"><i class="m">-</i>127<i>,</i>000<i>.</i>00</div><div class="t" style="left:906px;top:512px;height:16px;line-height:16px;"><i class="m">-</i>127<i>,</i>000<i>.</i>00</div><div class="t" style="left:984px;top:512px;height:16px;line-height:16px;"><i class="m">-</i>115<i>,</i>000<i>.</i>00</div><div style="left:11px;top:547px;width:1070px;height:1px;background:#eee"></div><div style="left:11px;top:565px;width:1070px;height:1px;background:#eee"></div><div class="t" style="left:11px;top:549px;height:16px;line-height:16px;">本期損益</div><div class="t" style="left:119px;top:548px;height:16px;line-height:16px;"><i class="m">-</i>1<i>,</i>515<i>,</i>000<i>.</i>00</div><div class="t" style="left:207px;top:548px;height:16px;line-height:16px;"><i class="m">-</i>127<i>,</i>000<i>.</i>00</div><div class="t" style="left:278px;top:548px;height:16px;line-height:16px;"><i class="m">-</i>127<i>,</i>000<i>.</i>00</div><div class="t" style="left:350px;top:548px;height:16px;line-height:16px;"><i class="m">-</i>130<i>,</i>000<i>.</i>00</div><div class="t" style="left:418px;top:548px;height:16px;line-height:16px;"><i class="m">-</i>127<i>,</i>000<i>.</i>00</div><div class="t" style="left:488px;top:548px;height:16px;line-height:16px;"><i class="m">-</i>127<i>,</i>000<i>.</i>00</div><div class="t" style="left:557px;top:548px;height:16px;line-height:16px;"><i class="m">-</i>127<i>,</i>000<i>.</i>00</div><div class="t" style="left:625px;top:548px;height:16px;line-height:16px;"><i class="m">-</i>127<i>,</i>000<i>.</i>00</div><div class="t" style="left:692px;top:548px;height:16px;line-height:16px;"><i class="m">-</i>127<i>,</i>000<i>.</i>00</div><div class="t" style="left:759px;top:548px;height:16px;line-height:16px;"><i class="m">-</i>127<i>,</i>000<i>.</i>00</div><div class="t" style="left:832px;top:548px;height:16px;line-height:16px;"><i class="m">-</i>127<i>,</i>000<i>.</i>00</div><div class="t" style="left:906px;top:548px;height:16px;line-height:16px;"><i class="m">-</i>127<i>,</i>000<i>.</i>00</div><div class="t" style="left:984px;top:548px;height:16px;line-height:16px;"><i class="m">-</i>115<i>,</i>000<i>.</i>00</div><div style="left:111px;top:188px;width:1px;height:378px;background:#eee"></div><div style="left:111px;top:224px;width:1px;height:17px;background:#fff"></div><div style="left:197px;top:188px;width:1px;height:378px;background:#eee"></div><div style="left:197px;top:224px;width:1px;height:17px;background:#fff"></div><div style="left:273px;top:188px;width:1px;height:378px;background:#eee"></div><div style="left:273px;top:224px;width:1px;height:17px;background:#fff"></div><div style="left:344px;top:188px;width:1px;height:378px;background:#eee"></div><div style="left:344px;top:224px;width:1px;height:17px;background:#fff"></div><div style="left:416px;top:188px;width:1px;height:378px;background:#eee"></div><div style="left:416px;top:224px;width:1px;height:17px;background:#fff"></div><div style="left:484px;top:188px;width:1px;height:378px;background:#eee"></div><div style="left:484px;top:224px;width:1px;height:17px;background:#fff"></div><div style="left:554px;top:188px;width:1px;height:378px;background:#eee"></div><div style="left:554px;top:224px;width:1px;height:17px;background:#fff"></div><div style="left:623px;top:188px;width:1px;height:378px;background:#eee"></div><div style="left:623px;top:224px;width:1px;height:17px;background:#fff"></div><div style="left:691px;top:188px;width:1px;height:378px;background:#eee"></div><div style="left:691px;top:224px;width:1px;height:17px;background:#fff"></div><div style="left:758px;top:188px;width:1px;height:378px;background:#eee"></div><div style="left:758px;top:224px;width:1px;height:17px;background:#fff"></div><div style="left:825px;top:188px;width:1px;height:378px;background:#eee"></div><div style="left:825px;top:224px;width:1px;height:17px;background:#fff"></div><div style="left:898px;top:188px;width:1px;height:378px;background:#eee"></div><div style="left:898px;top:224px;width:1px;height:17px;background:#fff"></div><div style="left:972px;top:188px;width:1px;height:378px;background:#eee"></div><div style="left:972px;top:224px;width:1px;height:17px;background:#fff"></div><div style="left:1050px;top:188px;width:1px;height:378px;background:#eee"></div><div style="left:1050px;top:224px;width:1px;height:17px;background:#fff"></div><div style="left:10px;top:992px;width:1072px;height:16px;background:#f0f0f0"></div><div style="left:10px;top:992px;width:10px;height:16px;background:#696969"></div><div style="left:37px;top:992px;width:983px;height:16px;background:#cdcdcd"></div><svg style="left:20px;top:992px" width="17" height="16"><path d="M10.500 4l-4 4 4 4" stroke="#505050" stroke-width="2" fill="none"/></svg><svg style="left:1065px;top:992px" width="17" height="16"><path d="M6.500 4l4 4-4 4" stroke="#505050" stroke-width="2" fill="none"/></svg><div style="left:20px;top:570px;width:548px;height:414px;background:#f0f0f0;border:1px solid #0078d7;box-shadow:0 3px 18px 1px rgba(0,0,0,.32)"></div><div style="left:20px;top:570px;width:548px;height:26px;background:#0078d7"></div><div class="u" style="left:24px;top:575px;height:16px;line-height:16px;color:#e8f3fc">條件</div><div class="t" style="left:27px;top:604px;height:16px;line-height:16px;">報表格式<i>:</i></div><div style="left:105px;top:602px;width:449px;height:17px;background:#00ff00;border:1px solid #9a9a9a"></div><div style="left:107px;top:603px;width:103px;height:12px;background:#0078d7"></div><div style="left:209px;top:603px;width:1px;height:12px;background:#e0703a"></div><div class="t" style="left:107px;top:601px;height:15px;line-height:15px;color:#fff">損<i>&nbsp;</i><i>&nbsp;</i>益<i>&nbsp;</i><i>&nbsp;</i>表<i>(</i>格式1<i>)</i></div><div style="left:534px;top:602px;width:20px;height:17px;background:#e4e4e4;border:1px solid #b4b4b4;box-shadow:inset 0 0 0 1px #d0d0d0"></div><svg style="left:534px;top:602px" width="20" height="17"><path d="M6 6.500l4 4 4-4" stroke="#555" stroke-width="1" fill="none"/></svg><div class="hl" style="left:26px;top:622px;width:528px;height:2px;"></div><div class="t" style="left:27px;top:630px;height:16px;line-height:16px;">比較方式<i>:</i></div><div class="r on" style="left:109px;top:631px;width:13px;height:13px;"></div><div class="t" style="left:127px;top:630px;height:16px;line-height:16px;">會計期</div><div class="r" style="left:220px;top:631px;width:13px;height:13px;"></div><div class="t" style="left:237px;top:630px;height:16px;line-height:16px;">帳套</div><div class="r" style="left:331px;top:631px;width:13px;height:13px;"></div><div class="t" style="left:348px;top:630px;height:16px;line-height:16px;">實際跟預算</div><div class="r" style="left:442px;top:631px;width:13px;height:13px;"></div><div class="t" style="left:459px;top:630px;height:16px;line-height:16px;">子科目</div><div class="hl" style="left:26px;top:648px;width:528px;height:2px;"></div><div class="gb" style="left:27px;top:656px;width:529px;height:64px;"></div><div class="r" style="left:32px;top:664px;width:13px;height:13px;"></div><div class="t" style="left:48px;top:663px;height:16px;line-height:16px;">本期報表</div><div class="r" style="left:207px;top:664px;width:13px;height:13px;"></div><div class="t" style="left:222px;top:663px;height:16px;line-height:16px;">兩期比較</div><div class="r on" style="left:382px;top:664px;width:13px;height:13px;"></div><div class="t" style="left:398px;top:663px;height:16px;line-height:16px;">多期比較</div><div class="dash" style="left:34px;top:684px;width:521px;height:0px;"></div><div class="t" style="left:45px;top:694px;height:16px;line-height:16px;">會計期</div><div class="spin" style="left:120px;top:692px;width:55px;height:20px;"></div><div class="t" style="left:134px;top:692px;height:16px;line-height:16px;">2019</div><svg style="left:158px;top:693px" width="16" height="18"><rect x=".5" y=".5" width="15" height="8" fill="#ececec" stroke="#b8b8b8"/><rect x=".5" y="9.5" width="15" height="8" fill="#ececec" stroke="#b8b8b8"/><path d="M5 6.5h6l-3-3.5zM5 11.5h6l-3 3.5z" fill="#000"/></svg><div class="t" style="left:176px;top:692px;height:18px;line-height:18px;font-size:16px;font-family:Liberation Serif,serif">/</div><div class="spin" style="left:187px;top:692px;width:39px;height:20px;"></div><div class="t" style="left:203px;top:692px;height:16px;line-height:16px;">1</div><svg style="left:209px;top:693px" width="16" height="18"><rect x=".5" y=".5" width="15" height="8" fill="#ececec" stroke="#b8b8b8"/><rect x=".5" y="9.5" width="15" height="8" fill="#ececec" stroke="#b8b8b8"/><path d="M5 6.5h6l-3-3.5zM5 11.5h6l-3 3.5z" fill="#000"/></svg><div class="t" style="left:271px;top:694px;height:16px;line-height:16px;">至</div><div class="spin" style="left:327px;top:692px;width:55px;height:20px;"></div><div class="t" style="left:341px;top:692px;height:16px;line-height:16px;">2019</div><svg style="left:365px;top:693px" width="16" height="18"><rect x=".5" y=".5" width="15" height="8" fill="#ececec" stroke="#b8b8b8"/><rect x=".5" y="9.5" width="15" height="8" fill="#ececec" stroke="#b8b8b8"/><path d="M5 6.5h6l-3-3.5zM5 11.5h6l-3 3.5z" fill="#000"/></svg><div class="t" style="left:383px;top:692px;height:18px;line-height:18px;font-size:16px;font-family:Liberation Serif,serif">/</div><div class="spin" style="left:394px;top:692px;width:39px;height:20px;"></div><div class="t" style="left:404px;top:692px;height:16px;line-height:16px;">12</div><svg style="left:416px;top:693px" width="16" height="18"><rect x=".5" y=".5" width="15" height="8" fill="#ececec" stroke="#b8b8b8"/><rect x=".5" y="9.5" width="15" height="8" fill="#ececec" stroke="#b8b8b8"/><path d="M5 6.5h6l-3-3.5zM5 11.5h6l-3 3.5z" fill="#000"/></svg><div class="gb" style="left:27px;top:723px;width:529px;height:54px;"></div><div class="r on" style="left:32px;top:730px;width:13px;height:13px;"></div><div class="t" style="left:48px;top:729px;height:16px;line-height:16px;">當前帳套</div><div class="r" style="left:294px;top:730px;width:13px;height:13px;"></div><div class="t" style="left:309px;top:729px;height:16px;line-height:16px;">多帳套匯總</div><div class="dash" style="left:34px;top:749px;width:521px;height:0px;"></div><div class="r on" style="left:32px;top:791px;width:13px;height:13px;"></div><div class="t" style="left:48px;top:790px;height:16px;line-height:16px;">實際數</div><div class="r" style="left:294px;top:791px;width:13px;height:13px;"></div><div class="t" style="left:309px;top:790px;height:16px;line-height:16px;">預算數</div><div class="hl" style="left:29px;top:808px;width:525px;height:2px;"></div><div style="left:32px;top:823px;width:13px;height:13px;background:#fff;border:1px solid #333"></div><div class="t" style="left:50px;top:822px;height:16px;line-height:16px;">金額<i>=</i>0的數據要顯示</div><div class="hl" style="left:32px;top:840px;width:522px;height:2px;"></div><div class="gb" style="left:27px;top:848px;width:529px;height:83px;"></div><div class="r dis" style="left:32px;top:854px;width:13px;height:13px;"></div><div class="t" style="left:48px;top:853px;height:16px;line-height:16px;color:#a0a0a0">子科目比較</div><div class="r on dis" style="left:294px;top:854px;width:13px;height:13px;"></div><div class="t" style="left:309px;top:853px;height:16px;line-height:16px;color:#a0a0a0">子科目匯總</div><div class="dash" style="left:34px;top:872px;width:521px;height:0px;"></div><div class="t" style="left:29px;top:878px;height:16px;line-height:16px;">子科目1</div><div style="left:80px;top:877px;width:473px;height:18px;background:#fff;border:1px solid #a0a8b4"></div><div style="left:81px;top:878px;width:85px;height:16px;background:#f0f0f0;border-right:1px solid #a0a8b4"></div><div class="t" style="left:81px;top:878px;height:16px;line-height:16px;">09<i>&nbsp;</i>地盤</div><div class="t" style="left:167px;top:878px;height:16px;line-height:16px;"><span class="l" style="margin-right:-1.2px">S</span>19001</div><div class="t" style="left:29px;top:904px;height:16px;line-height:16px;">子科目2</div><div style="left:80px;top:903px;width:472px;height:18px;background:#f0f0f0;border:1px solid #a0a8b4"></div><div style="left:81px;top:904px;width:85px;height:16px;border-right:1px solid #a0a8b4"></div><div style="left:166px;top:904px;width:93px;height:16px;background:#fff"></div><div class="t" style="left:81px;top:904px;height:16px;line-height:16px;">10<i>&nbsp;</i>工程項目</div><div class="t" style="left:167px;top:904px;height:16px;line-height:16px;"><span class="l" style="margin-right:-1.2px">P</span>02</div><div class="t" style="left:260px;top:904px;height:16px;line-height:16px;">地盤平整</div><div style="left:69px;top:941px;width:81px;height:25px;background:#e9e9e9;border:1px solid #adadad;box-shadow:inset 0 0 0 1px #d4d4d4"></div><svg style="left:75px;top:945px" width="16" height="15"><path d="M1.700,7 L4.200,7 L5.700,10.500 L10.200,2 L14.700,2 L6.200,13.500 L4.700,13.500 Z" fill="#555"/><path d="M1,6 L3.500,6 L5,9.500 L9.500,1 L14,1 L5.500,12.500 L4,12.500 Z" fill="#ff0000"/></svg><div class="t" style="left:91px;top:948px;height:16px;line-height:16px;">確定</div><div class="u fk" style="left:119.5px;top:947px;height:16px;line-height:16px;font-size:12.5px">(F8)</div><div style="left:444px;top:941px;width:81px;height:25px;background:#e9e9e9;border:1px solid #adadad;box-shadow:inset 0 0 0 1px #d4d4d4"></div><svg style="left:448px;top:945px" width="17" height="15"><path d="M2 1.800l13 11.400M15 1.800l-13 11.400" stroke="#ff0000" stroke-width="2.700" fill="none"/></svg><div class="t" style="left:467px;top:947px;height:16px;line-height:16px;">取消</div><div class="u fk" style="left:492.5px;top:947px;height:16px;line-height:16px;font-size:12.5px">(Esc)</div><svg style="left:0;top:0" width="1094" height="1038"><g fill="none" stroke="#ff1e12" stroke-width="3"><rect x="32.5" y="680.5" width="407" height="44" rx="3"/><rect x="22.5" y="872.5" width="293" height="56" rx="3"/></g><path d="M437,701 L453.5,706.5 L449,707.5 L577.600,865.500 L576.500,866.500 L441,713 L438,717 Z" fill="#ff1e12"/><path d="M317,911.3 L331.3,901 L328.7,904.4 L581,879 L581.100,880.500 L328.7,913.7 L333,918 Z" fill="#ff1e12"/></svg><div class="red" style="left:581px;top:651px;height:28px;line-height:28px;">成本中心：可以分析查詢某一個地盤中某一個工程</div><div class="red" style="left:581px;top:679px;height:28px;line-height:28px;">項目之損益表</div><div class="red" style="left:587px;top:853px;height:28px;line-height:28px;">成本損益表中，查詢<b>201901-201912</b>地盤<b>001</b>中<b>P02</b></div><div class="red" style="left:587px;top:881px;height:28px;line-height:28px;">地盤平整項目<b>1-12</b>之損益表</div><div style="left:0px;top:1017px;width:1094px;height:2px;background:#fafafa"></div><div style="left:0px;top:1019px;width:1094px;height:19px;background:#f0f0f0"></div><div style="left:0px;top:1021px;width:176px;height:19px;border:1px solid #fff;border-top-color:#a0a0a0;border-left-color:#a0a0a0"></div><div style="left:178px;top:1021px;width:208px;height:19px;border:1px solid #fff;border-top-color:#a0a0a0;border-left-color:#a0a0a0"></div><div style="left:388px;top:1021px;width:178px;height:19px;border:1px solid #fff;border-top-color:#a0a0a0;border-left-color:#a0a0a0"></div><div style="left:568px;top:1021px;width:432px;height:19px;border:1px solid #fff;border-top-color:#a0a0a0;border-left-color:#a0a0a0"></div><div class="t" style="left:0px;top:1023px;height:15px;line-height:15px;">操作員<i>:</i><i>[</i><span class="l" style="margin-right:-8.4px">manager</span><i>]</i></div><div class="t" style="left:179px;top:1023px;height:15px;line-height:15px;">數據庫<i>:</i><i>&nbsp;</i><span class="l" style="margin-right:-4.8px">msde</span><i>/</i><span class="l" style="margin-right:-6.0px">MSSQL</span></div><div style="left:918px;top:1017px;width:176px;height:21px;background:#fff"></div><svg style="left:890px;top:1008px" width="204" height="30" viewBox="0 0 204 30"><g transform="rotate(-10 20 20)"><rect x="8" y="7" width="25" height="28" rx="4" fill="#f4511e"/></g><path d="M29.500 13.500c-7-3-17-2-17.500 3-.5 5 15 3 15 8.500 0 5-10 5.500-17.500 2" stroke="#fff" stroke-width="3.600" fill="none" stroke-linecap="round"/><g fill="none" stroke="#1e73d2" stroke-width="2"><circle cx="91" cy="20" r="7"/><path d="M87.500 21.500c1.500 3 5.500 3 7 0" stroke-width="1.500"/><path d="M108.500 19.500c0 3.500 2.500 5.500 5 5.500s5-2 5-5.500M113.500 25v3M110 28.500h7" stroke-width="1.700"/></g><circle cx="88.500" cy="17.500" r="1.100" fill="#1e73d2"/><circle cx="93.500" cy="17.500" r="1.100" fill="#1e73d2"/><rect x="110.500" y="11" width="6" height="11.500" rx="3" fill="#1e73d2"/><circle cx="65" cy="18" r="1.600" fill="none" stroke="#1e73d2" stroke-width="1.300"/><path d="M70 22.500h3.200v3.500l-2.200 3.200h-1.500l1.500-3.200h-1z" fill="#1e73d2"/><rect x="127.800" y="14.800" width="15.400" height="10.400" rx="1.500" fill="#fff" stroke="#1e73d2" stroke-width="1.800"/><path d="M130 17.500h11M130 20h11" stroke="#1e73d2" stroke-width="1.600" stroke-dasharray="1.800 1.200"/><path d="M131.500 22.800h8" stroke="#1e73d2" stroke-width="1.500"/><circle cx="157.500" cy="16.500" r="3.300" fill="#a9bcd9"/><path d="M151 27c0-5 2.500-7 6.500-7s6.500 2 6.500 7z" fill="#a9bcd9"/><rect x="158.500" y="22.500" width="6" height="5" rx="1" fill="#fff" stroke="#a9bcd9"/><path d="M172 17l4.500-3c1.500 1.500 3.500 1.500 5 0l4.500 3-2 3.200-1.800-1V26.500h-6.400V19.200l-1.800 1z" fill="#1e73d2"/></svg><div class="u" style="left:930px;top:1019px;height:18px;line-height:18px;color:#1e73d2;font-weight:bold;font-size:15px">中</div><div class="u" style="left:1084px;top:1019px;height:18px;line-height:18px;color:#1e73d2;font-weight:bold;font-size:15px">繁</div></body></html>
